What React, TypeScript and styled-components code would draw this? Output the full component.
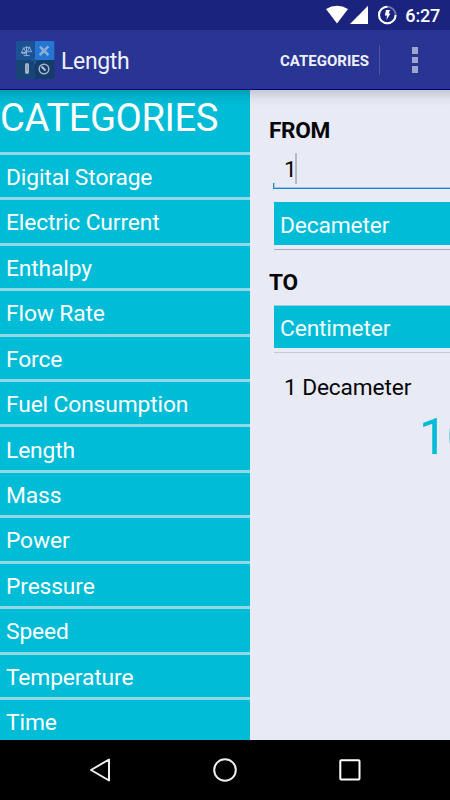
import React from 'react';
import styled, { createGlobalStyle } from 'styled-components';

const Global = createGlobalStyle`
  * { box-sizing: border-box; }
  body { margin: 0; background: #000; font-family: Roboto, "Liberation Sans", sans-serif; }
`;

const Screen = styled.div`
  width: 450px;
  height: 800px;
  display: flex;
  flex-direction: column;
  overflow: hidden;
  background: #e8eaf6;
`;

const StatusBar = styled.header`
  height: 30px;
  flex: none;
  display: flex;
  align-items: flex-start;
  justify-content: flex-end;
  padding-right: 10px;
  background: #1a237e;
  color: #fff;
`;

const Clock = styled.span`
  margin-left: 8px;
  font-size: 18px;
  font-weight: 500;
  line-height: 32px;
  letter-spacing: -0.2px;
`;

const AppBar = styled.div`
  height: 60px;
  flex: none;
  display: flex;
  align-items: center;
  padding-left: 16px;
  background: #283593;
  border-bottom: 1px solid #00007f;
  color: #f0f0fb;
`;

const Title = styled.h1`
  flex: 1;
  margin: 4px 0 0 6px;
  font-size: 23px;
  font-weight: 400;
  line-height: 30px;
  letter-spacing: -0.35px;
`;

const Action = styled.button`
  border: 0;
  padding: 2px 10px 0 0;
  background: none;
  color: inherit;
  font: 700 15px/28px Roboto, sans-serif;
  height: 30px;
  border-right: 1px solid #4a55a5;
`;

const Overflow = styled.div`
  width: 70px;
  display: flex;
  flex-direction: column;
  align-items: center;
  gap: 3px;
  padding-top: 1px;
`;

const Dot = styled.i`
  width: 6.5px;
  height: 6.5px;
  background: #a0a5d0;
`;

const Content = styled.main`
  position: relative;
  flex: 1;
  min-height: 0;
  display: flex;
  overflow: hidden;
`;

const BarShadow = styled.div`
  position: absolute;
  inset: 0 0 auto;
  height: 16px;
  background: linear-gradient(rgba(0, 0, 0, 0.15), rgba(0, 0, 0, 0.04) 55%, transparent);
`;

const Drawer = styled.nav`
  width: 250px;
  flex: none;
  overflow: hidden;
  background: #00bcd7;
  color: #fff;
`;

const DrawerTitle = styled.div`
  height: 61.9px;
  padding-top: 1px;
  font-size: 38.2px;
  line-height: 54px;
  letter-spacing: -0.45px;
`;

const List = styled.ul`
  list-style: none;
  margin: 0;
  padding: 0;
`;

const Item = styled.li`
  height: 45.43px;
  padding: 2.1px 0 0 6px;
  border-top: 3px solid #93d7e2;
  font-size: 22.8px;
  line-height: 42px;
  letter-spacing: -0.13px;
`;

const Converter = styled.section`
  width: 200px;
  flex: none;
  overflow: hidden;
  padding-left: 19px;
  color: #050505;
`;

const Label = styled.div<{ $top: number }>`
  margin-top: ${(p) => p.$top}px;
  height: 30px;
  padding-top: 1px;
  font-size: 22.6px;
  font-weight: 700;
  line-height: 30px;
  letter-spacing: -0.3px;
`;

const Field = styled.div`
  height: 44px;
  margin-left: 4px;
  display: flex;
  flex-direction: column;
  justify-content: flex-end;
`;

const Value = styled.div`
  display: flex;
  height: 30px;
  padding-left: 11px;
  font-size: 22.7px;
  line-height: 34px;
`;

const Caret = styled.i`
  width: 2px;
  height: 31px;
  margin-left: -2px;
  background: #b9bac8;
`;

const Underline = styled.div`
  height: 6px;
  border-left: 1px solid #158bc7;
  border-bottom: 1px solid #158bc7;
  box-shadow: inset 1px -1px 0 #a3c5df;
`;

const Spinner = styled.div<{ $top: number; $line: string }>`
  height: 48px;
  margin: ${(p) => p.$top}px 0 0 5px;
  border-bottom: 1px solid ${(p) => p.$line};
`;

const Choice = styled.div<{ $offset?: boolean }>`
  height: 43px;
  padding: 2px 0 0 6px;
  background: #00bcd7;
  box-shadow: ${(p) => (p.$offset ? 'inset 0 1px 0 #9dcbdc' : 'none')};
  color: #f4fdff;
  font-size: 22.8px;
  line-height: 43px;
  letter-spacing: -0.15px;
`;

const Source = styled.div`
  margin-top: 20px;
  padding-left: 15px;
  font-size: 22.7px;
  line-height: 30px;
  letter-spacing: -0.12px;
`;

const Result = styled.div`
  margin-top: 4px;
  padding-left: 150px;
  color: #00bcd7;
  font-size: 50px;
  line-height: 60px;
  letter-spacing: -0.3px;
  white-space: nowrap;
`;

const NavBar = styled.footer`
  height: 60px;
  flex: none;
  display: grid;
  grid-template-columns: repeat(3, 125px);
  justify-content: center;
  align-items: center;
  justify-items: center;
  background: #000;
`;

const categories = [
  'Digital Storage', 'Electric Current', 'Enthalpy', 'Flow Rate', 'Force',
  'Fuel Consumption', 'Length', 'Mass', 'Power', 'Pressure', 'Speed',
  'Temperature', 'Time',
];

const StatusIcons = () => (
  <svg width="72" height="30" viewBox="325 0 72 30">
    <path d="M326 9Q337 2.5 348 9L337 23.6Z" fill="#fff" />
    <path d="M368 5.8V24H350Z" fill="#fff" />
    <circle cx="387.3" cy="15" r="8.3" fill="none" stroke="#6e74b0" strokeWidth="2" />
    <path d="M387.3 6.7A8.3 8.3 0 1 0 395.6 15" fill="none" stroke="#fff" strokeWidth="2" />
    <path d="M386 10h4l-1.3 3.6h1.7L386.5 20l.5-4.4h-2.2Z" fill="#fff" />
  </svg>
);

const Logo = () => (
  <svg width="39" height="38" viewBox="0 0 39 38">
    <path fill="#1c5193" d="M0 0h19v19H0z" />
    <path fill="#2576d3" d="M19 0h19.3v19H19z" />
    <path fill="#174577" d="M0 19h19v19H0z" />
    <path fill="#153b69" d="M19 19h19.3v19H19z" />
    <g fill="none" stroke="#8fb0d5" strokeWidth="1">
      <path d="M6.5 7.2 14.5 6M10.5 5v9.5M7.8 14.6h5.8M7.8 7.2 5.4 11.5h4.6ZM13.3 6.3l-2 4.4h4.4ZM5.3 12q2.4 1.5 4.8 0" />
      <path d="M24 5.6l8.4 8.4M32.4 5.4l-8.8 8.8" strokeWidth="2.5" />
      <path d="M25 5.2l8 8M23.4 12.8l1.7 1.7" stroke="#2576d3" strokeWidth=".5" strokeDasharray="1 1" />
      <circle cx="28" cy="28" r="4.8" strokeWidth="1.5" stroke="#a3b4ca" />
      <path d="M25.5 25.5l4 4" strokeWidth="1.9" stroke="#b3c2d5" />
    </g>
    <rect x="9" y="22" width="4" height="11" rx="2" fill="#a7b5c9" />
    <path d="M11 24v6" stroke="#7f98b6" />
    <path d="M19 15.5v7M15.5 19h7" stroke="#2c6fb5" strokeWidth="1.2" strokeDasharray="2.6 1.8" />
  </svg>
);

export default function App() {
  return (
    <Screen>
      <Global />
      <StatusBar>
        <StatusIcons />
        <Clock>6:27</Clock>
      </StatusBar>
      <AppBar>
        <Logo />
        <Title>Length</Title>
        <Action>CATEGORIES</Action>
        <Overflow><Dot /><Dot /><Dot /></Overflow>
      </AppBar>
      <Content>
        <Drawer>
          <DrawerTitle>CATEGORIES</DrawerTitle>
          <List>{categories.map((c) => <Item key={c}>{c}</Item>)}</List>
        </Drawer>
        <Converter>
          <Label $top={25}>FROM</Label>
          <Field>
            <Value>1<Caret /></Value>
            <Underline />
          </Field>
          <Spinner $top={13} $line="#a9abbc"><Choice>Decameter</Choice></Spinner>
          <Label $top={17}>TO</Label>
          <Spinner $top={8} $line="#c6c8d6"><Choice $offset>Centimeter</Choice></Spinner>
          <Source>1 Decameter</Source>
          <Result>1000</Result>
        </Converter>
        <BarShadow />
      </Content>
      <NavBar>
        <svg width="26" height="26" viewBox="0 0 26 26" fill="none" stroke="#eee" strokeWidth="2" strokeLinejoin="round">
          <path d="M22 2.5v21L4 13Z" />
        </svg>
        <svg width="26" height="26" viewBox="0 0 26 26" fill="none" stroke="#eee" strokeWidth="2">
          <circle cx="13" cy="13" r="10.8" />
        </svg>
        <svg width="26" height="26" viewBox="0 0 26 26" fill="none" stroke="#fff" strokeWidth="2">
          <rect x="3.3" y="3.3" width="19.2" height="19.2" rx="1" />
        </svg>
      </NavBar>
    </Screen>
  );
}
